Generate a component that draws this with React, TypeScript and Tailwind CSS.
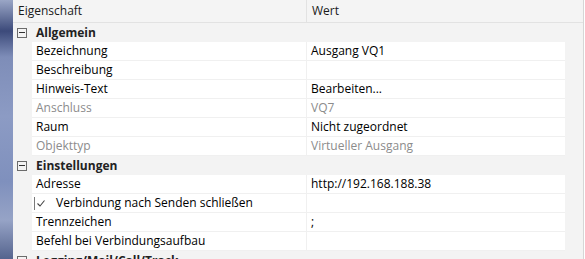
import React from "react";

type Row = { name: string; value?: string; disabled?: boolean; checkbox?: boolean };

const font = { fontFamily: '"Segoe UI", "Open Sans", "Noto Sans", sans-serif' };

function MinusBox() {
  return (
    <div className="w-[10px] h-[10px] border border-[#6b6b6b] flex items-center justify-center shrink-0 bg-[#f3f3f3]">
      <div className="w-[6px] h-[1px] bg-[#333]" />
    </div>
  );
}

function Category({ label }: { label: string }) {
  return (
    <div className="h-[19px] flex items-center shrink-0">
      <div className="ml-[4px]">
        <MinusBox />
      </div>
      <span className="ml-[9px] font-bold text-[#222] leading-none">{label}</span>
    </div>
  );
}

function DataRow({ row }: { row: Row }) {
  const color = row.disabled ? "text-[#8c8c8c]" : "text-[#000]";
  return (
    <div className="h-[19px] flex shrink-0">
      <div className="w-[19px] shrink-0" />
      <div className="w-[533px] flex bg-white border-b border-[#f0f0f0]">
        <div className={`w-[275px] shrink-0 border-r border-[#f0f0f0] flex items-center ${color}`}>
          {row.checkbox ? (
            <div className="flex items-center overflow-visible whitespace-nowrap">
              <div className="ml-[2px] w-[13px] h-[13px] border-l border-[#7a7a7a] flex items-center justify-center">
                <svg width="10" height="9" viewBox="0 0 10 9">
                  <path d="M1.5 4.5 L4 7 L8.5 1.5" fill="none" stroke="#444" strokeWidth="1.1" />
                </svg>
              </div>
              <span className="ml-[9px] leading-none">{row.name}</span>
            </div>
          ) : (
            <span className="pl-[4px] leading-none whitespace-nowrap">{row.name}</span>
          )}
        </div>
        <div className={`flex-1 flex items-center pl-[4px] ${color}`}>
          <span className="leading-none whitespace-nowrap">{row.value ?? ""}</span>
        </div>
      </div>
    </div>
  );
}

const allgemein: Row[] = [
  { name: "Bezeichnung", value: "Ausgang VQ1" },
  { name: "Beschreibung" },
  { name: "Hinweis-Text", value: "Bearbeiten..." },
  { name: "Anschluss", value: "VQ7", disabled: true },
  { name: "Raum", value: "Nicht zugeordnet" },
  { name: "Objekttyp", value: "Virtueller Ausgang", disabled: true },
];

const einstellungen: Row[] = [
  { name: "Adresse", value: "http://192.168.188.38" },
  { name: "Verbindung nach Senden schließen", checkbox: true },
  { name: "Trennzeichen", value: ";" },
  { name: "Befehl bei Verbindungsaufbau" },
];

export default function App() {
  return (
    <div className="w-[585px] h-[259px] flex overflow-hidden bg-white text-[12px]" style={font}>
      <div className="w-[13px] shrink-0 bg-[linear-gradient(180deg,#9aa6c6_0%,#3c4a7a_12%,#7e8db8_22%,#8c9bc4_45%,#7f90bd_70%,#96a3c6_85%,#55648e_100%)]" />
      <div className="w-[571px] shrink-0 bg-[#f3f3f3] border-r border-[#d6d6d6] flex flex-col">
        <div className="h-[23px] flex shrink-0 border-b border-[#e2e2e2] bg-[#f4f4f4] text-[#1a1a1a]">
          <div className="w-[294px] shrink-0 border-r border-[#e2e2e2] flex items-center pl-[5px]">
            <span className="leading-none">Eigenschaft</span>
          </div>
          <div className="flex-1 flex items-center pl-[5px]">
            <span className="leading-none">Wert</span>
          </div>
        </div>
        <Category label="Allgemein" />
        {allgemein.map((r) => (
          <DataRow key={r.name} row={r} />
        ))}
        <Category label="Einstellungen" />
        {einstellungen.map((r) => (
          <DataRow key={r.name} row={r} />
        ))}
        <Category label="Logging/Mail/Call/Track" />
      </div>
    </div>
  );
}
